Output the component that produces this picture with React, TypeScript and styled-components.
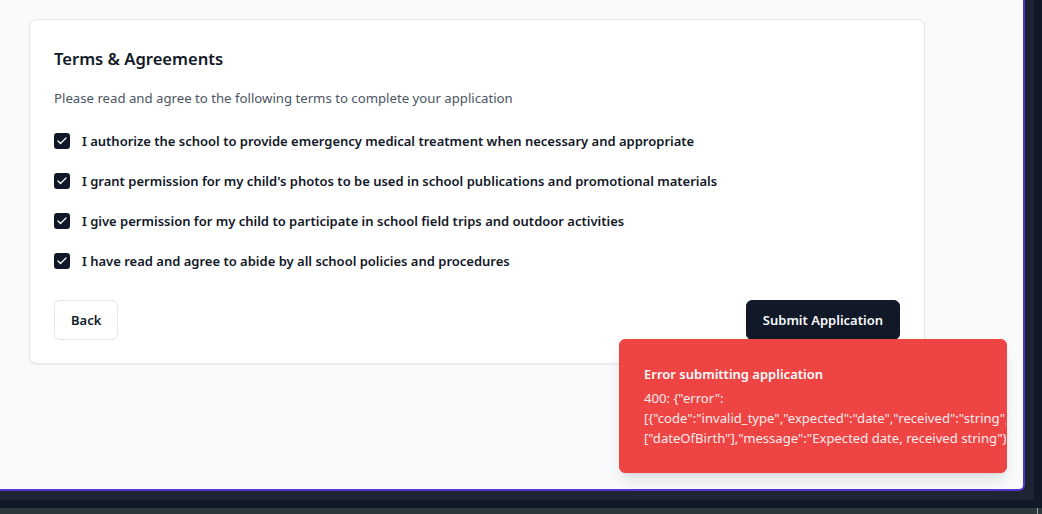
import React from "react";
import styled, { createGlobalStyle } from "styled-components";

const Global = createGlobalStyle`
  * { box-sizing: border-box; }
  html, body { margin: 0; padding: 0; }
  body {
    font-family: "Noto Sans", "Open Sans", sans-serif;
    background: #111827;
    overflow: hidden;
  }
`;

const Desktop = styled.div`
  width: 1042px;
  height: 514px;
  display: grid;
  grid-template-rows: 508px 6px;
  background: #111827;
`;

const Shell = styled.div`
  width: 1034px;
  height: 500px;
  background: #1e2433;
`;

const Window = styled.div`
  position: relative;
  width: 1025px;
  height: 491px;
  background: #f8fafc;
  border-right: 2px solid #4f38c9;
  border-bottom: 2px solid #4f38c9;
  border-bottom-right-radius: 6px;
  overflow: hidden;
`;

const StatusBar = styled.div`
  display: flex;
  justify-content: flex-end;
  padding-right: 4px;
  background: #2b393e;
`;

const Cursor = styled.span`
  width: 1px;
  height: 6px;
  background: #9aa4ad;
`;

const Main = styled.main`
  padding: 19px 0 0 29px;
`;

const Card = styled.section`
  width: 896px;
  background: #ffffff;
  border: 1px solid #e5e7eb;
  border-radius: 8px;
  box-shadow: 0 1px 2px rgba(0, 0, 0, 0.05);
  padding: 24px 24px 23px 24px;
`;

const Title = styled.h2`
  margin: 0;
  padding-top: 1px;
  height: 28px;
  font-size: 16.6px;
  line-height: 28px;
  font-weight: 600;
  color: #111827;
`;

const Subtitle = styled.p`
  margin: 16px 0 0;
  font-size: 13.2px;
  line-height: 20px;
  color: #4b5563;
`;

const Terms = styled.div`
  margin-top: 23px;
  display: flex;
  flex-direction: column;
  gap: 20px;
`;

const Row = styled.label`
  display: flex;
  align-items: center;
  gap: 12px;
  height: 20px;
  font-size: 13px;
  line-height: 20px;
  font-weight: 600;
  color: #111827;
`;

const Box = styled.span`
  width: 16px;
  height: 16px;
  border-radius: 3px;
  background: #111827;
  display: flex;
  align-items: center;
  justify-content: center;
  flex: none;
`;

const Actions = styled.div`
  margin-top: 29px;
  display: flex;
  justify-content: space-between;
`;

const Button = styled.button<{ $primary?: boolean }>`
  height: 40px;
  padding: 0 16px;
  border-radius: 6px;
  font-family: inherit;
  font-size: 13px;
  font-weight: 600;
  cursor: pointer;
  border: 1px solid ${(p) => (p.$primary ? "#111827" : "#e5e7eb")};
  background: ${(p) => (p.$primary ? "#111827" : "#ffffff")};
  color: ${(p) => (p.$primary ? "#f8fafc" : "#111827")};
`;

const ToastViewport = styled.div`
  position: absolute;
  right: 0;
  bottom: 0;
  width: 420px;
  padding: 16px;
`;

const Toast = styled.div`
  width: 388px;
  overflow: hidden;
  background: #ef4444;
  border: 1px solid #ef4444;
  border-radius: 6px;
  padding: 24px 32px 24px 24px;
  box-shadow: 0 10px 15px -3px rgba(0, 0, 0, 0.1), 0 4px 6px -4px rgba(0, 0, 0, 0.1);
  display: grid;
  gap: 4px;
  color: #ffffff;
`;

const ToastTitle = styled.div`
  font-size: 13px;
  line-height: 20px;
  font-weight: 600;
`;

const ToastLine = styled.div`
  font-size: 13.1px;
  line-height: 20px;
  opacity: 0.9;
  white-space: nowrap;
`;

const Check = () => (
  <svg width="12" height="12" viewBox="0 0 24 24" fill="none" stroke="#ffffff" strokeWidth="2.5" strokeLinecap="round" strokeLinejoin="round">
    <path d="M20 6 9 17l-5-5" />
  </svg>
);

const terms = [
  "I authorize the school to provide emergency medical treatment when necessary and appropriate",
  "I grant permission for my child's photos to be used in school publications and promotional materials",
  "I give permission for my child to participate in school field trips and outdoor activities",
  "I have read and agree to abide by all school policies and procedures",
];

export default function App() {
  return (
    <>
      <Global />
      <Desktop>
        <Shell>
          <Window>
            <Main>
              <Card>
                <Title>Terms &amp; Agreements</Title>
                <Subtitle>Please read and agree to the following terms to complete your application</Subtitle>
                <Terms>
                  {terms.map((t) => (
                    <Row key={t}>
                      <Box>
                        <Check />
                      </Box>
                      {t}
                    </Row>
                  ))}
                </Terms>
                <Actions>
                  <Button>Back</Button>
                  <Button $primary>Submit Application</Button>
                </Actions>
              </Card>
            </Main>
            <ToastViewport>
              <Toast>
                <ToastTitle>Error submitting application</ToastTitle>
                <div>
                  <ToastLine>400: {'{"error":'}</ToastLine>
                  <ToastLine>{'[{"code":"invalid_type","expected":"date","received":"string","path":'}</ToastLine>
                  <ToastLine>{'["dateOfBirth"],"message":"Expected date, received string"}]}'}</ToastLine>
                </div>
              </Toast>
            </ToastViewport>
          </Window>
        </Shell>
        <StatusBar>
          <Cursor />
        </StatusBar>
      </Desktop>
    </>
  );
}
